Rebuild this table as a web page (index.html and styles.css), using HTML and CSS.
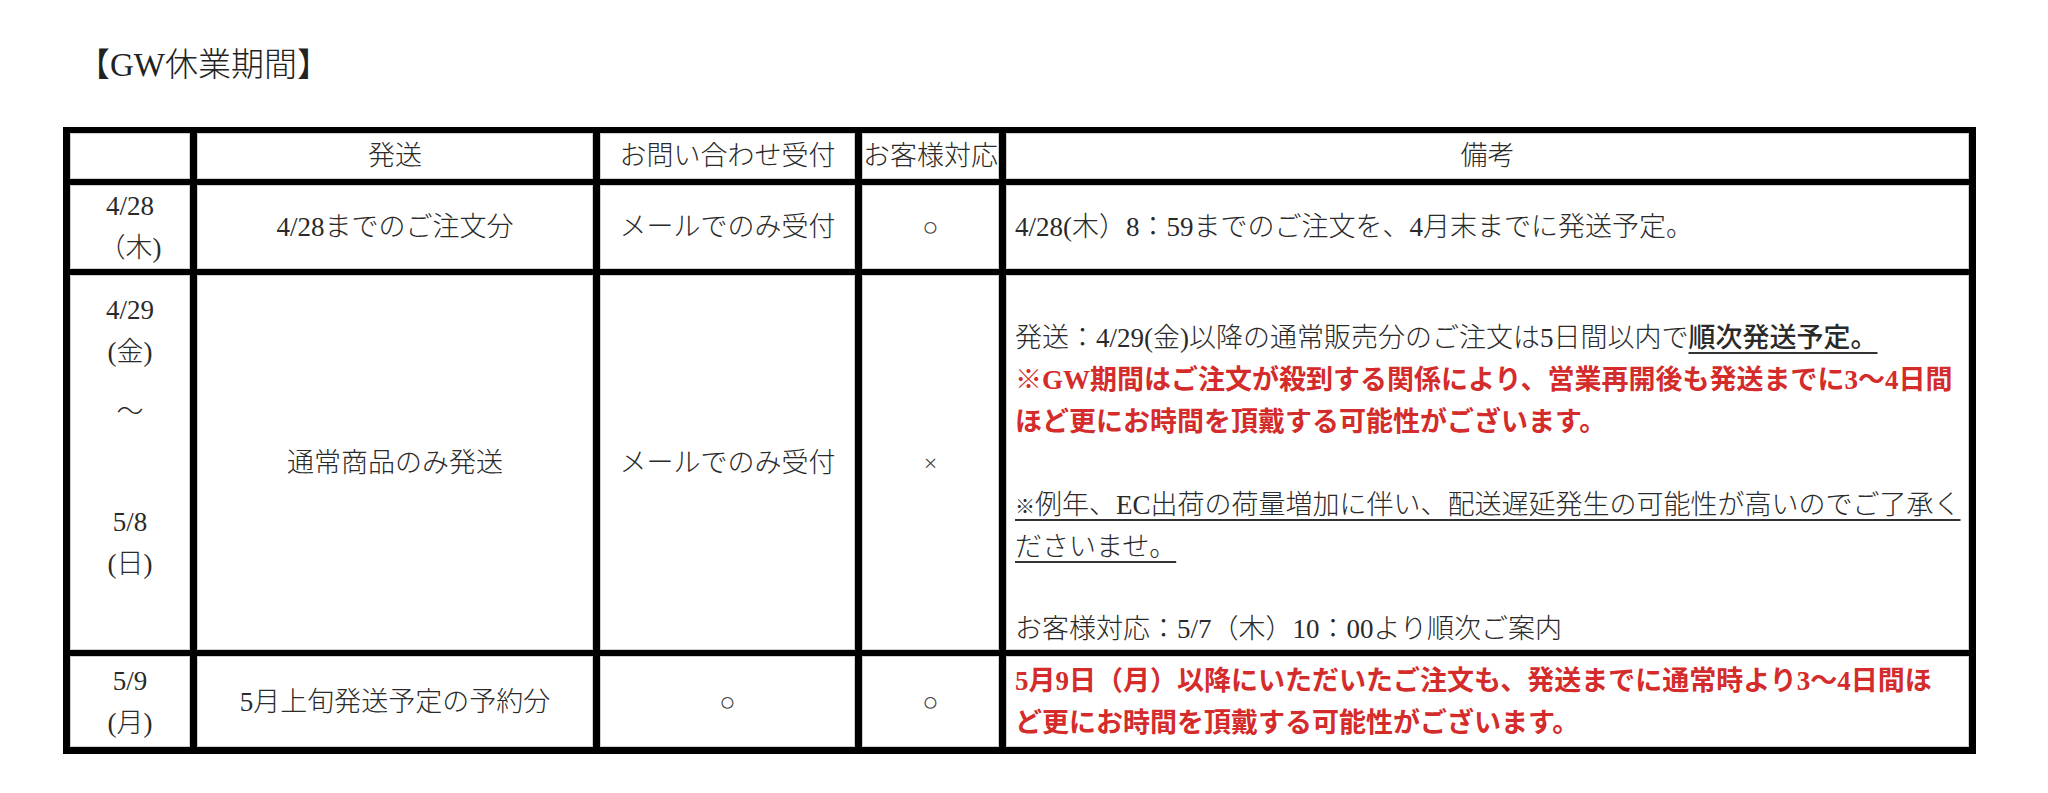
FILE: index.html
```html
<!DOCTYPE html>
<html lang="ja">
<head>
<meta charset="utf-8">
<title>GW休業期間</title>
<link rel="stylesheet" href="styles.css">
</head>
<body>
<div class="page">
  <h1 class="title">【GW休業期間】</h1>
  <div class="sheet">
    <div class="cell"></div>
    <div class="cell">発送</div>
    <div class="cell">お問い合わせ受付</div>
    <div class="cell">お客様対応</div>
    <div class="cell">備考</div>

    <div class="cell date"><div>4/28</div><div>（木)</div></div>
    <div class="cell">4/28までのご注文分</div>
    <div class="cell">メールでのみ受付</div>
    <div class="cell"><span class="mark">○</span></div>
    <div class="cell note">4/28(木）8：59までのご注文を、4月末までに発送予定。</div>

    <div class="cell date range">
      <div>4/29</div>
      <div>(金)</div>
      <div class="tilde">～</div>
      <div class="end">5/8</div>
      <div>(日)</div>
    </div>
    <div class="cell">通常商品のみ発送</div>
    <div class="cell">メールでのみ受付</div>
    <div class="cell"><span class="mark cross">×</span></div>
    <div class="cell note long">
      <div class="line">発送：4/29(金)以降の通常販売分のご注文は5日間以内で<span class="ul strong">順次発送予定。</span></div>
      <div class="line red">※GW期間はご注文が殺到する関係により、営業再開後も発送までに3〜4日間</div>
      <div class="line red">ほど更にお時間を頂戴する可能性がございます。</div>
      <div class="line blank"></div>
      <div class="line"><span class="ul"><span class="small">※</span>例年、EC出荷の荷量増加に伴い、配送遅延発生の可能性が高いのでご了承く</span></div>
      <div class="line"><span class="ul">ださいませ。</span></div>
      <div class="line blank"></div>
      <div class="line">お客様対応：5/7（木）10：00より順次ご案内</div>
    </div>

    <div class="cell date"><div>5/9</div><div>(月)</div></div>
    <div class="cell">5月上旬発送予定の予約分</div>
    <div class="cell"><span class="mark">○</span></div>
    <div class="cell"><span class="mark">○</span></div>
    <div class="cell note stack">
      <div class="line red">5月9日（月）以降にいただいたご注文も、発送までに通常時より3〜4日間ほ</div>
      <div class="line red">ど更にお時間を頂戴する可能性がございます。</div>
    </div>
  </div>
</div>
</body>
</html>
```

FILE: styles.css
```css
html, body {
  margin: 0;
  padding: 0;
  background: #ffffff;
}

body {
  font-family: "Liberation Serif", "Noto Sans CJK JP", serif;
  color: #2a2a2a;
}

.page {
  padding: 45px 0 0 63px;
}

.title {
  margin: 0 0 42px 14px;
  font-size: 33px;
  line-height: 40px;
  font-weight: 300;
  color: #222;
}

.sheet {
  display: grid;
  grid-template-columns: 120px 396px 255px 137px 963px;
  grid-template-rows: 46px 84px 375px 91px;
  gap: 6px 7px;
  padding: 6px 7px 7px 7px;
  background: #000;
  width: max-content;
}

.cell {
  background: #fff;
  box-shadow: inset 0 0 0 1px #cfcfcf;
  display: flex;
  align-items: center;
  justify-content: center;
  text-align: center;
  font-size: 27px;
  line-height: 42px;
  font-weight: 300;
  white-space: nowrap;
  overflow: visible;
}

.date {
  flex-direction: column;
}

.range {
  justify-content: flex-start;
  padding-top: 14px;
}

.range .tilde {
  margin-top: 18px;
}

.range .end {
  margin-top: 68px;
}

.mark {
  font-size: 27px;
  color: #444;
}

.mark.cross {
  font-size: 24px;
}

.note {
  justify-content: flex-start;
  text-align: left;
  padding-left: 9px;
}

.long,
.stack {
  flex-direction: column;
  align-items: flex-start;
}

.long {
  justify-content: flex-start;
  padding-top: 42px;
}

.stack {
  justify-content: center;
}

.line {
  height: 42px;
}

.red {
  color: #d42b2b;
  font-weight: 700;
}

.ul {
  text-decoration: underline;
  text-decoration-thickness: 2px;
  text-underline-offset: 5px;
  text-decoration-color: #333;
}

.strong {
  font-weight: 500;
}

.small {
  font-size: 20px;
}
```
